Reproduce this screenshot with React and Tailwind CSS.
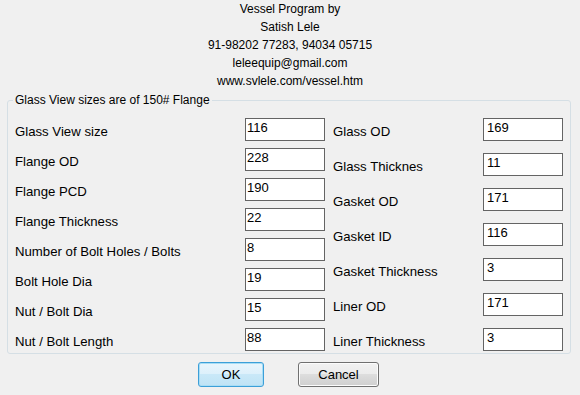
import React from "react";

const left = [
  ["Glass View size", "116"],
  ["Flange OD", "228"],
  ["Flange PCD", "190"],
  ["Flange Thickness", "22"],
  ["Number of Bolt Holes / Bolts", "8"],
  ["Bolt Hole Dia", "19"],
  ["Nut / Bolt Dia", "15"],
  ["Nut / Bolt Length", "88"],
];

const right = [
  ["Glass OD", "169"],
  ["Glass Thicknes", "11"],
  ["Gasket OD", "171"],
  ["Gasket ID", "116"],
  ["Gasket Thickness", "3"],
  ["Liner OD", "171"],
  ["Liner Thickness", "3"],
];

function Row({ label, value, padLeft }) {
  return (
    <div className="flex h-[23px] items-center justify-between">
      <span className="pt-[4px] text-[13.2px] leading-[15px] text-black whitespace-nowrap">{label}</span>
      <input
        readOnly
        value={value}
        className={`h-[23px] w-[80px] border border-[#646464] bg-white ${padLeft} pr-[2px] pt-0 pb-[4px] text-[13px] leading-[15px] text-black outline-none font-['Liberation_Sans',Arial,sans-serif]`}
      />
    </div>
  );
}

export default function App() {
  return (
    <div className="h-[395px] w-[580px] overflow-hidden bg-[#f0f0f0] font-['Liberation_Sans',Arial,sans-serif] text-black">
      <div className="text-center text-[12px] leading-[18px]">
        <div>Vessel Program by</div>
        <div>Satish Lele</div>
        <div>91-98202 77283, 94034 05715</div>
        <div>leleequip@gmail.com</div>
        <div>www.svlele.com/vessel.htm</div>
      </div>

      <fieldset className="ml-[7px] mt-[3px] w-[564px] rounded-[3px] border border-[#d5dfe5] p-0">
        <legend className="ml-[5px] px-[2px] text-[12px] leading-[14px]">
          Glass View sizes are of 150# Flange
        </legend>
        <div className="flex gap-[8px] pl-[7px] pt-[11px] pb-[2px]">
          <div className="flex w-[310px] flex-col gap-[7px]">
            {left.map(([l, v]) => (
              <Row key={l} label={l} value={v} padLeft="pl-[1px]" />
            ))}
          </div>
          <div className="flex w-[230px] flex-col gap-[12px]">
            {right.map(([l, v]) => (
              <Row key={l} label={l} value={v} padLeft="pl-[3px]" />
            ))}
          </div>
        </div>
      </fieldset>

      <div className="mt-[8px] flex gap-[34px] pl-[198px]">
        <button className="h-[25px] w-[66px] rounded-[3px] border border-[#3c9fd8] bg-[linear-gradient(#e9f5fc,#dcf0fb_50%,#c9e8f8_50%,#bfe3f5)] text-[13px] leading-[15px] text-black shadow-[inset_0_0_0_1px_#a8ddf5]">
          OK
        </button>
        <button className="h-[25px] w-[81px] rounded-[3px] border border-[#707070] bg-[linear-gradient(#f2f2f2,#ebebeb_50%,#dddddd_50%,#cfcfcf)] text-[13px] leading-[15px] text-black shadow-[inset_0_0_0_1px_#fcfcfc]">
          Cancel
        </button>
      </div>
    </div>
  );
}
